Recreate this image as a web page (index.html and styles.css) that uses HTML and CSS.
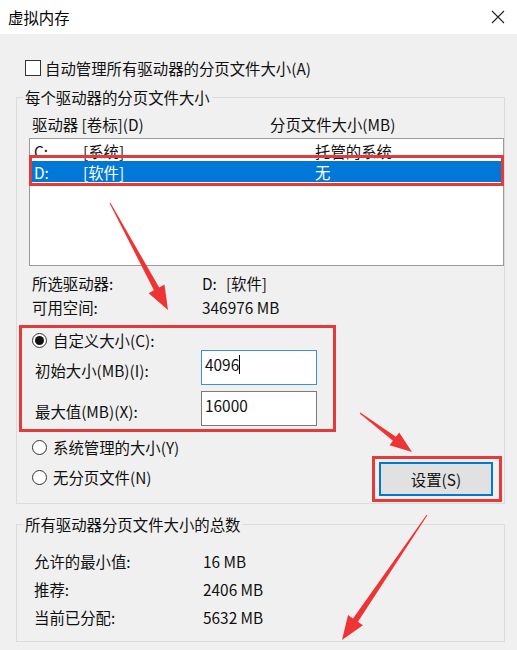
FILE: index.html
```html
<!DOCTYPE html>
<html lang="zh-CN">
<head>
<meta charset="utf-8">
<title>虚拟内存</title>
<link rel="stylesheet" href="styles.css">
</head>
<body>
<div class="window">
  <div class="titlebar">
    <span class="title">虚拟内存</span>
    <svg class="close" width="14" height="14" viewBox="0 0 14 14"><path d="M1 1 L13 13 M13 1 L1 13" stroke="#222" stroke-width="1.1" fill="none"/></svg>
  </div>
  <div class="main">
    <div class="auto-row"><span class="checkbox"></span><span>自动管理所有驱动器的分页文件大小(A)</span></div>

    <fieldset class="group group-drives">
      <legend>每个驱动器的分页文件大小</legend>
      <div class="list-head"><span class="col-drive">驱动器 [卷标](D)</span><span>分页文件大小(MB)</span></div>
      <div class="listbox">
        <div class="list-row"><span class="c1">C:</span><span class="c2">[系统]</span><span>托管的系统</span></div>
        <div class="list-row selected"><span class="c1">D:</span><span class="c2">[软件]</span><span>无</span></div>
        <div class="mark-row"></div>
      </div>
      <div class="info">
        <div class="info-row"><span class="info-label">所选驱动器:</span><span class="drive-val"><span>D:</span><span>[软件]</span></span></div>
        <div class="info-row"><span class="info-label">可用空间:</span><span>346976 MB</span></div>
      </div>
      <div class="custom-box">
        <div class="radio-row"><span class="radio checked"></span><span>自定义大小(C):</span></div>
        <div class="field-row"><span class="field-label">初始大小(MB)(I):</span><span class="input focused">4096<span class="caret"></span></span></div>
        <div class="field-row"><span class="field-label">最大值(MB)(X):</span><span class="input">16000</span></div>
      </div>
      <div class="bottom-row">
        <div class="radios">
          <div class="radio-row tall"><span class="radio"></span><span>系统管理的大小(Y)</span></div>
          <div class="radio-row tall"><span class="radio"></span><span>无分页文件(N)</span></div>
        </div>
        <div class="set-box"><div class="set-btn">设置(S)</div></div>
      </div>
    </fieldset>

    <fieldset class="group group-total">
      <legend>所有驱动器分页文件大小的总数</legend>
      <div class="total-row"><span class="total-label">允许的最小值:</span><span>16 MB</span></div>
      <div class="total-row"><span class="total-label">推荐:</span><span>2406 MB</span></div>
      <div class="total-row"><span class="total-label">当前已分配:</span><span>5632 MB</span></div>
    </fieldset>
  </div>

  <svg class="arrows" width="517" height="650" viewBox="0 0 517 650">
    <polygon fill="#ee3535" points="109.56,203.24 153.92,290.33 148.65,293.19 168,310 164.47,284.61 159.2,287.47 110.44,202.76"/>
    <polygon fill="#ee3535" points="359.7,413.4 392.9,440.8 389.6,445.2 412,452 399.2,432.4 395.9,436.8 360.3,412.6"/>
    <polygon fill="#ee3535" points="426.59,514.72 353.01,618.47 348.05,615.1 342,640 362.93,625.22 357.97,621.85 427.41,515.28"/>
  </svg>
</div>
</body>
</html>
```

FILE: styles.css
```css
* { box-sizing: border-box; }
html, body { margin: 0; padding: 0; }
body {
  background: #f0f0f0;
  font-family: "Noto Sans CJK SC", "Noto Sans", sans-serif;
  font-size: 15.4px;
  line-height: 20px;
  color: #111;
}
.window {
  position: relative;
  width: 517px;
  height: 650px;
  overflow: hidden;
  background: #f0f0f0;
}
.titlebar {
  height: 34px;
  background: #fff;
  display: flex;
  align-items: center;
  justify-content: space-between;
  padding: 0 12px 0 8px;
}
.title { color: #000; }
.close { display: block; }

.main { padding: 0 12px 0 16px; }

.auto-row {
  margin-top: 26px;
  height: 16px;
  padding-left: 9px;
  display: flex;
  align-items: center;
  gap: 4px;
}
.checkbox {
  width: 16px;
  height: 16px;
  border: 1px solid #333;
  background: #fff;
  flex: none;
}

.group {
  margin: 0;
  min-width: 0;
  border: 1px solid #dcdcdc;
  padding: 0 0 0 6px;
}
.group legend {
  padding: 0 2px;
  line-height: 20px;
}
.group-drives { margin-top: 11px; }
.group-total { margin-top: 10px; padding-top: 13px; padding-bottom: 10px; }

.list-head {
  margin-top: 7px;
  height: 20px;
  display: flex;
  padding-left: 9px;
}
.col-drive { width: 238px; }

.listbox {
  position: relative;
  margin-top: 4px;
  margin-left: 6px;
  width: 475px;
  height: 128px;
  border: 1px solid #9a9a9a;
  background: #fff;
  padding-top: 1px;
}
.list-row {
  height: 21px;
  display: flex;
  align-items: center;
  padding-left: 4px;
}
.list-row.selected { background: #0078d7; color: #fff; }
.c1 { width: 49px; }
.c2 { width: 232px; }
.mark-row {
  position: absolute;
  left: -1px;
  top: 16px;
  width: 475px;
  height: 31px;
  border: 3px solid #e53a3a;
}

.info { margin-top: 5px; }
.info-row {
  height: 24px;
  display: flex;
  align-items: center;
  padding-left: 9px;
}
.info-label { width: 170px; }
.drive-val { display: flex; gap: 9px; }

.custom-box {
  margin-top: 6px;
  margin-left: -4px;
  width: 317px;
  border: 3px solid #e53a3a;
  padding: 2px 0 3px 10px;
}
.radio-row {
  height: 20px;
  display: flex;
  align-items: center;
  gap: 6px;
}
.radio-row.tall { height: 30px; }
.radio {
  width: 15px;
  height: 15px;
  border: 1px solid #333;
  border-radius: 50%;
  background: #fff;
  flex: none;
  display: flex;
  align-items: center;
  justify-content: center;
}
.radio.checked::after {
  content: "";
  width: 9px;
  height: 9px;
  border-radius: 50%;
  background: #111;
}
.field-row {
  display: flex;
  align-items: center;
  padding-left: 3px;
}
.field-row + .field-row { margin-top: 6px; }
.field-label { width: 166px; padding-top: 4px; }
.input {
  width: 116px;
  height: 35px;
  border: 1px solid #7a7a7a;
  background: #fff;
  padding: 2px 3px 0;
  display: flex;
  align-items: flex-start;
  line-height: 22px;
}
.input.focused { border-color: #3d8fd8; }
.caret {
  display: inline-block;
  width: 1px;
  height: 19px;
  margin-top: 2px;
  background: #000;
}

.bottom-row {
  height: 71px;
  display: flex;
}
.radios { padding-left: 9px; }
.set-box {
  margin-left: auto;
  margin-right: 2px;
  margin-top: 24px;
  width: 130px;
  height: 46px;
  border: 3px solid #e53a3a;
  padding: 3px 6px 3px 4px;
}
.set-btn {
  height: 34px;
  background: #e1e1e1;
  border: 2px solid #0078d7;
  display: flex;
  align-items: center;
  justify-content: center;
}

.total-row {
  height: 28px;
  display: flex;
  align-items: center;
  padding-left: 11px;
}
.total-label { width: 169px; }

.arrows {
  position: absolute;
  left: 0;
  top: 0;
  pointer-events: none;
}
```
